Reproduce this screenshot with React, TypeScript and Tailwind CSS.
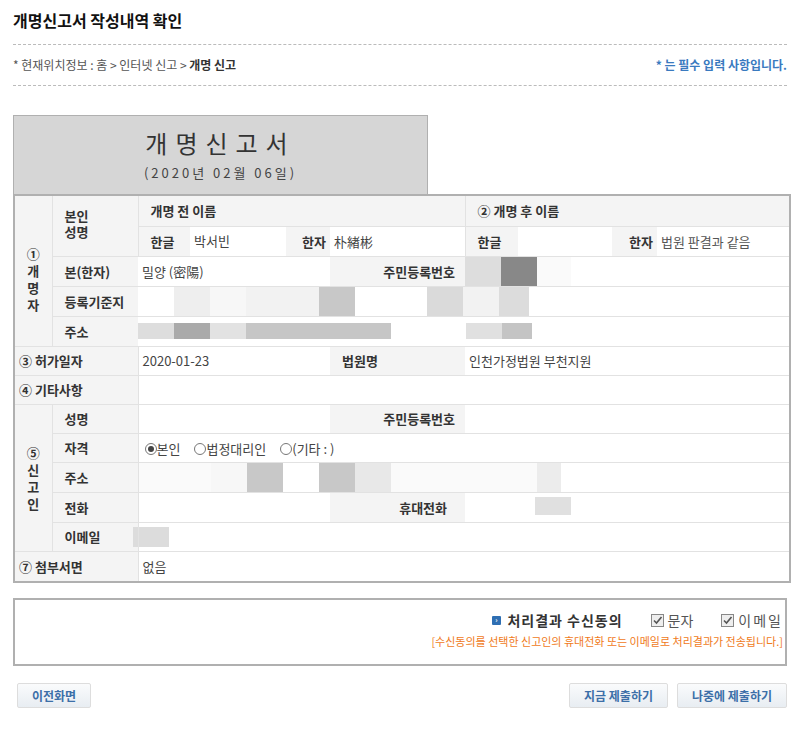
import React from "react";

const L = "bg-[#f4f4f4] font-bold text-[#333] px-3 align-middle";
const V = "bg-white text-[#444] px-1 align-middle";
const row = "h-[29px] border-b border-[#e2e2e2]";

function Blocks({ items }: { items: [number, string][] }) {
  return (
    <div className="flex h-[29px]">
      {items.map(([w, c], i) => (
        <div key={i} style={{ width: w, background: c }} />
      ))}
    </div>
  );
}

export default function App() {
  return (
    <div className="w-[800px] h-[731px] bg-white text-[13px] text-[#333]" style={{ fontFamily: '"Noto Sans CJK KR", "Liberation Sans", sans-serif' }}>
      <div className="px-[13px]">
        <h1 className="pt-[8px] h-[44px] text-[16px] font-bold text-[#111] leading-[24px]">개명신고서 작성내역 확인</h1>
        <div className="border-t border-dashed border-[#bbb]" />
        <div className="flex justify-between items-center h-[40px] text-[12px]">
          <div className="text-[#555]">* 현재위치정보 : 홈 &gt; 인터넷 신고 &gt; <b className="text-[#333]">개명 신고</b></div>
          <div className="text-[#3a7abf] font-bold">* 는 필수 입력 사항입니다.</div>
        </div>
        <div className="border-t border-dashed border-[#bbb]" />
        <div className="mt-[29px] w-[415px] h-[79px] bg-[#d6d6d6] border border-b-0 border-[#b0b0b0] flex flex-col items-center justify-center">
          <div className="text-[24px] tracking-[8px] text-[#333] leading-[32px]">개명신고서</div>
          <div className="text-[13px] tracking-[3px] text-[#444] mt-[4px]">(2020년 02월 06일)</div>
        </div>
        <table className="w-[778px] border-collapse border-2 border-[#b0b0b0] table-fixed leading-none">
          <colgroup>
            {[38, 86, 52, 96, 44, 135, 53, 94, 45, 133].map((w, i) => <col key={i} style={{ width: w }} />)}
          </colgroup>
          <tbody>
            <tr className={row + " h-[31px]"}>
              <td rowSpan={5} className="bg-[#f4f4f4] border-r border-[#e2e2e2] text-center font-bold leading-[17px] pt-4">①<br />개<br />명<br />자</td>
              <td rowSpan={2} className={L + " border-r border-[#e2e2e2] leading-[16px] align-top pt-[12px]"}>본인<br />성명</td>
              <td colSpan={4} className={L + " border-r border-[#e2e2e2]"}>개명 전 이름</td>
              <td colSpan={4} className={L}>② 개명 후 이름</td>
            </tr>
            <tr className={row + " h-[30px]"}>
              <td className={L}>한글</td>
              <td className={V + " align-top pt-[7px]"}>박서빈</td>
              <td className={L + " text-right pr-1"}>한자</td>
              <td className={V + " border-r border-[#e2e2e2]"}>朴緖彬</td>
              <td className={L}>한글</td>
              <td className={V}></td>
              <td className={L + " text-right pr-1"}>한자</td>
              <td className={V + " text-[#555]"}>법원 판결과 같음</td>
            </tr>
            <tr className={row}>
              <td className={L}>본(한자)</td>
              <td colSpan={3} className={V}>밀양 (密陽)</td>
              <td className={L + " text-right pr-[10px]"}>주민등록번호</td>
              <td colSpan={4} className="p-0"><Blocks items={[[0, "#fff"], [36, "#ddd"], [36, "#888"], [34, "#fafafa"]]} /></td>
            </tr>
            <tr className={row}>
              <td className={L}>등록기준지</td>
              <td colSpan={8} className="p-0"><Blocks items={[[36, "#fff"], [36, "#eee"], [36, "#f7f7f7"], [73, "#f2f2f2"], [36, "#c8c8c8"], [72, "#fff"], [36, "#dadada"], [36, "#f2f2f2"], [30, "#dcdcdc"]]} /></td>
            </tr>
            <tr className={row}>
              <td className={L}>주소</td>
              <td colSpan={8} className="p-0"><div className="flex h-[29px] items-start pt-[6px]"><div className="h-[16px] w-[36px] bg-[#ddd]" /><div className="h-[16px] w-[36px] bg-[#aaa]" /><div className="h-[16px] w-[36px] bg-[#e2e2e2]" /><div className="h-[16px] w-[145px] bg-[#c6c6c6]" /><div className="w-[75px]" /><div className="h-[16px] w-[36px] bg-[#e0e0e0]" /><div className="h-[16px] w-[30px] bg-[#c4c4c4]" /></div></td>
            </tr>
            <tr className={row}>
              <td colSpan={2} className={L + " px-[4px] border-r border-[#e2e2e2]"}>③ 허가일자</td>
              <td colSpan={3} className={V}>2020-01-23</td>
              <td className={L}>법원명</td>
              <td colSpan={4} className={V}>인천가정법원 부천지원</td>
            </tr>
            <tr className={row}>
              <td colSpan={2} className={L + " px-[4px] border-r border-[#e2e2e2]"}>④ 기타사항</td>
              <td colSpan={8} className={V}></td>
            </tr>
            <tr className={row}>
              <td rowSpan={5} className="bg-[#f4f4f4] border-r border-b border-[#e2e2e2] text-center font-bold leading-[17px]">⑤<br />신<br />고<br />인</td>
              <td className={L + " border-r border-[#e2e2e2]"}>성명</td>
              <td colSpan={3} className={V}></td>
              <td className={L + " text-right pr-[10px]"}>주민등록번호</td>
              <td colSpan={4} className={V}></td>
            </tr>
            <tr className={row}>
              <td className={L + " border-r border-[#e2e2e2]"}>자격</td>
              <td colSpan={8} className={V + " px-[6px]"}>
                <span className="inline-flex items-center gap-[14px]">
                  <span className="inline-flex items-center"><span className="w-[12px] h-[12px] rounded-full border border-[#777] inline-flex items-center justify-center"><span className="w-[6px] h-[6px] rounded-full bg-[#444]" /></span>본인</span>
                  <span className="inline-flex items-center"><span className="w-[12px] h-[12px] rounded-full border border-[#777]" />법정대리인</span>
                  <span className="inline-flex items-center"><span className="w-[12px] h-[12px] rounded-full border border-[#777]" />(기타 : )</span>
                </span>
              </td>
            </tr>
            <tr className={row}>
              <td className={L + " border-r border-[#e2e2e2]"}>주소</td>
              <td colSpan={8} className="p-0"><Blocks items={[[72, "#fafafa"], [36, "#f7f7f7"], [36, "#c8c8c8"], [36, "#fff"], [36, "#c8c8c8"], [36, "#e8e8e8"], [146, "#fafafa"], [24, "#ececec"]]} /></td>
            </tr>
            <tr className={row}>
              <td className={L + " border-r border-[#e2e2e2]"}>전화</td>
              <td colSpan={3} className={V}></td>
              <td className={L + " text-right pr-[18px]"}>휴대전화</td>
              <td colSpan={4} className="p-0"><div className="flex h-[29px] items-start pt-[4px]"><div className="w-[70px]" /><div className="w-[36px] h-[18px] bg-[#e0e0e0]" /></div></td>
            </tr>
            <tr className={row}>
              <td className={L + " border-r border-[#e2e2e2]"}>이메일</td>
              <td colSpan={8} className="p-0"><div className="w-[36px] h-[20px] bg-[#dcdcdc] -ml-[6px]" /></td>
            </tr>
            <tr className="h-[31px]">
              <td colSpan={2} className={L + " px-[4px] border-r border-[#e2e2e2]"}>⑦ 첨부서면</td>
              <td colSpan={8} className={V}>없음</td>
            </tr>
          </tbody>
        </table>
        <div className="mt-[15px] h-[68px] border-2 border-[#b0b0b0] flex flex-col items-end pr-[2px] pt-[10px]">
          <div className="flex items-center gap-[28px] text-[14px]">
            <span className="flex items-center gap-[6px] font-bold tracking-[1px]"><span className="w-[9px] h-[9px] bg-[#2f6fb3] rounded-[1px] text-white text-[7px] leading-[9px] text-center">›</span>처리결과 수신동의</span>
            <span className="flex items-center gap-[4px] text-[#555]"><Check />문자</span>
            <span className="flex items-center gap-[4px] text-[#555] tracking-[2px]"><Check />이메일</span>
          </div>
          <div className="text-[11px] text-[#f07a1a] mt-[2px]">[수신동의를 선택한 신고인의 휴대전화 또는 이메일로 처리결과가 전송됩니다.]</div>
        </div>
        <div className="flex justify-between mt-[17px] px-[4px]">
          <Btn>이전화면</Btn>
          <div className="flex gap-[9px] -mr-[4px]"><Btn>지금 제출하기</Btn><Btn>나중에 제출하기</Btn></div>
        </div>
      </div>
    </div>
  );
}

function Check() {
  return (
    <span className="w-[13px] h-[13px] border border-[#888] bg-[#eee] inline-flex items-center justify-center">
      <svg width="11" height="11" viewBox="0 0 11 11"><path d="M2 5.5 L4.5 8 L9.5 2" stroke="#555" strokeWidth="1.6" fill="none" /></svg>
    </span>
  );
}

function Btn({ children }: { children: React.ReactNode }) {
  return (
    <div className="h-[25px] px-[14px] rounded-[2px] border border-[#ddd] bg-gradient-to-b from-[#fafbfc] to-[#e8edf2] text-[#3c6fa8] font-bold text-[12px] flex items-center">{children}</div>
  );
}
